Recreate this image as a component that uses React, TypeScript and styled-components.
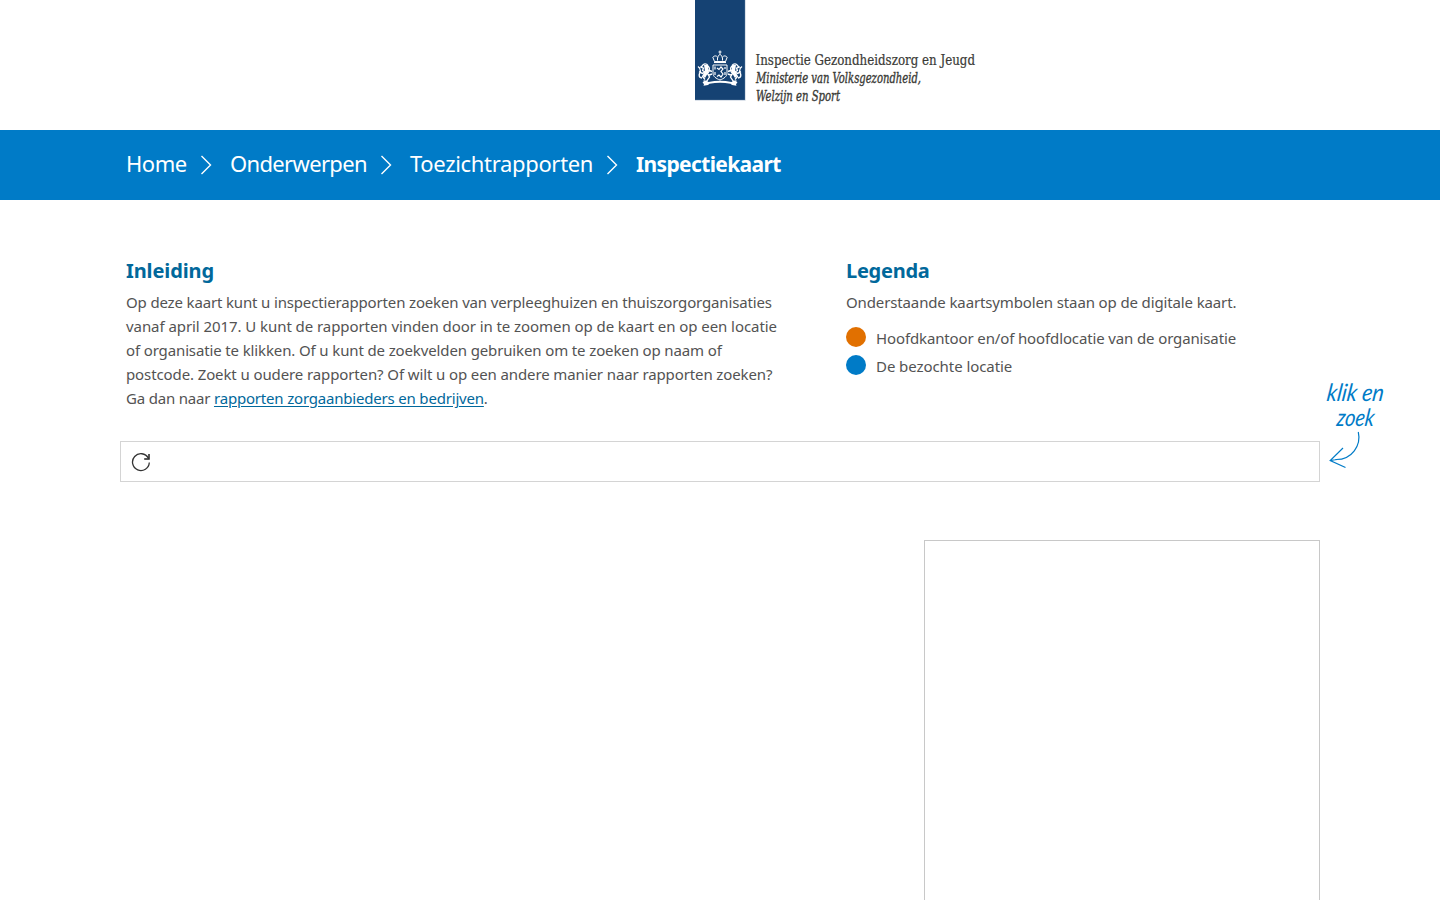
import React from "react";
import styled, { createGlobalStyle } from "styled-components";

const Global = createGlobalStyle`
  * { box-sizing: border-box; }
  html, body { margin: 0; height: 100%; overflow: hidden; background: #fff; }
  body { font-family: "Noto Sans", "Open Sans", sans-serif; color: #535353; }
`;
const Page = styled.div`
  height: 900px;
  display: flex;
  flex-direction: column;
  overflow: hidden;
`;
const Header = styled.header`
  height: 130px;
  flex: none;
  padding-left: 695px;
`;
const LogoArt = styled.svg`
  display: block;
  width: 400px;
  height: 112px;
  overflow: visible;
`;
const Bar = styled.nav`
  height: 70px;
  flex: none;
  background: #007bc7;
  display: flex;
  align-items: center;
  padding: 0 0 4px 126px;
  color: #fff;
`;
const Crumb = styled.span<{ $w: number; $ls: number; $current?: boolean }>`
  width: ${(p) => p.$w}px;
  flex: none;
  white-space: nowrap;
  font-size: ${(p) => (p.$current ? 21 : 22)}px;
  line-height: 32px;
  padding-top: ${(p) => (p.$current ? 2 : 0)}px;
  font-weight: ${(p) => (p.$current ? 700 : 400)};
  letter-spacing: ${(p) => p.$ls}px;
`;
const Chevron = styled.svg`
  flex: none;
  width: 12px;
  height: 20px;
  margin: 4px 18px 0 13px;
`;
const Container = styled.main`
  width: 1200px;
  margin: 0 auto;
  flex: 1;
  display: flex;
  flex-direction: column;
`;
const Columns = styled.div`
  display: grid;
  grid-template-columns: 720px 480px;
  height: 241px;
  flex: none;
  padding-top: 55px;
`;
const Column = styled.section`
  padding: 0 6px;
`;
const Title = styled.h2<{ $ls: number }>`
  margin: 0 0 3px;
  font-size: 20px;
  line-height: 32px;
  font-weight: 700;
  letter-spacing: ${(p) => p.$ls}px;
  color: #01689b;
`;
const Line = styled.span<{ $ls: number }>`
  display: block;
  font-size: 15px;
  line-height: 24px;
  white-space: nowrap;
  letter-spacing: ${(p) => p.$ls}px;
`;
const Link = styled.a`
  color: #01689b;
  text-decoration: underline;
  text-underline-offset: 2px;
`;
const Legend = styled.ul`
  list-style: none;
  margin: 12px 0 0;
  padding: 0;
`;
const LegendItem = styled.li`
  display: flex;
  gap: 10px;
  height: 28px;
`;
const Dot = styled.span<{ $color: string }>`
  width: 20px;
  height: 20px;
  margin-top: 1px;
  border-radius: 50%;
  background: ${(p) => p.$color};
`;
const SearchBox = styled.div`
  position: relative;
  height: 41px;
  flex: none;
  border: 1px solid #d4d4d4;
  padding: 10px;
`;
const Refresh = styled.svg`
  display: block;
  width: 20px;
  height: 20px;
`;
const Hint = styled.svg`
  position: absolute;
  left: 1200px;
  top: -68px;
  width: 75px;
  height: 100px;
`;
const Results = styled.aside`
  align-self: flex-end;
  width: 396px;
  margin-top: 58px;
  flex: 1;
  border: 1px solid #c8c8c8;
  border-bottom: 0;
`;

const intro: [string, number][] = [
  ["Op deze kaart kunt u inspectierapporten zoeken van verpleeghuizen en thuiszorgorganisaties", -0.155],
  ["vanaf april 2017. U kunt de rapporten vinden door in te zoomen op de kaart en op een locatie", -0.066],
  ["of organisatie te klikken. Of u kunt de zoekvelden gebruiken om te zoeken op naam of", -0.13],
  ["postcode. Zoekt u oudere rapporten? Of wilt u op een andere manier naar rapporten zoeken?", -0.11],
];

const Lion = () => (
  <g>
    <path d="M13 65.500c-1.500-2.400-5-2.200-5.600.3l-1.600 1.200 2.600 1.200-.8 2.200 2.400 1.600-2.600 1.400-3.400-1.800M13 66c2 2 1.500 5-.5 7.500l2 3.500-3 4.500-3-.5M10.500 72.500l-3 4 2.500 3M13 70l4 1.500M13 75.500l4-1.500M7 78c-4-.5-3-4-1.500-6.500 0-3-1-4-2.500-5" fill="none" stroke="#fff" strokeWidth="1.350" />
    <path d="M9 65h4v8l-3 5-2-2 2-5z" fill="#fff" />
  </g>
);

const Logo = () => (
  <LogoArt viewBox="0 0 400 112">
    <rect width="50" height="100" fill="#154273" />
    <path d="M50.300 0V100.300H0" fill="none" stroke="#b6c3d3" strokeWidth=".6" />
    <g fill="none" stroke="#fff" strokeWidth="1">
      <path d="M25 50.500v4M23.500 52h3M19.500 61.500l-1.700-4.300c2-2 4-1.500 5 .3.500-2 1.200-2.800 2.200-2.800s1.700.8 2.200 2.800c1-1.800 3-2.300 5-.3l-1.700 4.300zM22.500 57.500v3M27.500 57.500v3" />
      <path d="M19 62.300h12" strokeWidth="1.500" />
      <path d="M18 65h14v8c0 3.500-3 5.500-7 7-4-1.500-7-3.500-7-7z" />
      <path d="M22 68l2 1.500 2-2.500 2 2-2 2.500 2 2.500-2 3-2-2-2 1.500M20 66.500v3M20 72v3M30 67v2M30 72v3" strokeWidth="1.200" />
    </g>
    <Lion />
    <g transform="translate(50 0) scale(-1 1)"><Lion /></g>
    <path d="M7.500 82.200l4-1.400 2 1.200c8-1.500 15-1.500 23 0l2-1.200 4 1.400-1.500 2 .5 1.500-4.500-.7-1.500-1.200c-7-1.500-14-1.500-21 0l-1.500 1.200-4.500.7.500-1.500z" fill="#fff" />
    <g fill="#3b3b37" stroke="#3b3b37" fontFamily="DejaVu Serif Condensed, DejaVu Serif, serif">
      <text x="60.500" y="65.200" fontSize="14.200" strokeWidth=".2" textLength="219.500" lengthAdjust="spacingAndGlyphs">Inspectie Gezondheidszorg en Jeugd</text>
      <g fontStyle="italic" fontSize="14" strokeWidth=".35">
        <text x="61" y="82.500" textLength="165" lengthAdjust="spacingAndGlyphs">Ministerie van Volksgezondheid,</text>
        <text x="61" y="100.500" textLength="84" lengthAdjust="spacingAndGlyphs">Welzijn en Sport</text>
      </g>
    </g>
  </LogoArt>
);

const Separator = () => (
  <Chevron viewBox="0 0 12 20">
    <path d="M1.500 1l9 9-9 9" fill="none" stroke="#fff" strokeWidth="1.400" />
  </Chevron>
);

export default function App() {
  return (
    <Page>
      <Global />
      <Header><Logo /></Header>
      <Bar>
        <Crumb $w={61} $ls={-0.45}>Home</Crumb>
        <Separator />
        <Crumb $w={137} $ls={-0.66}>Onderwerpen</Crumb>
        <Separator />
        <Crumb $w={183} $ls={-0.33}>Toezichtrapporten</Crumb>
        <Separator />
        <Crumb $w={146} $ls={-0.64} $current>Inspectiekaart</Crumb>
      </Bar>
      <Container>
        <Columns>
          <Column>
            <Title $ls={-0.1}>Inleiding</Title>
            {intro.map(([text, ls]) => <Line key={text} $ls={ls}>{text}</Line>)}
            <Line $ls={-0.19}>Ga dan naar <Link>rapporten zorgaanbieders en bedrijven</Link>.</Line>
          </Column>
          <Column>
            <Title $ls={-0.25}>Legenda</Title>
            <Line $ls={-0.13}>Onderstaande kaartsymbolen staan op de digitale kaart.</Line>
            <Legend>
              <LegendItem><Dot $color="#e17000" /><Line $ls={-0.13}>Hoofdkantoor en/of hoofdlocatie van de organisatie</Line></LegendItem>
              <LegendItem><Dot $color="#007bc7" /><Line $ls={-0.07}>De bezochte locatie</Line></LegendItem>
            </Legend>
          </Column>
        </Columns>
        <SearchBox>
          <Refresh viewBox="0 0 20 20">
            <path d="M17.300 6.100A8.400 8.400 0 1 0 18.300 10.500" fill="none" stroke="#333" strokeWidth="1.300" />
            <path d="M18 2v5h-4.800" fill="none" stroke="#222" strokeWidth="1.500" />
          </Refresh>
          <Hint viewBox="0 0 75 100">
            <g fill="#007bc7" fontFamily="Lato, sans-serif" fontStyle="italic" fontSize="24">
              <text transform="translate(5 27) skewX(-8)" textLength="57" lengthAdjust="spacingAndGlyphs">klik en</text>
              <text transform="translate(15 52) skewX(-8)" textLength="37.500" lengthAdjust="spacingAndGlyphs">zoek</text>
            </g>
            <path d="M37.300 58c3 13-6 28-23 27.500M22 74L9.200 86.500 24.500 93.500M9.200 86.500l7-1" fill="none" stroke="#007bc7" strokeWidth="1.200" />
          </Hint>
        </SearchBox>
        <Results />
      </Container>
    </Page>
  );
}
